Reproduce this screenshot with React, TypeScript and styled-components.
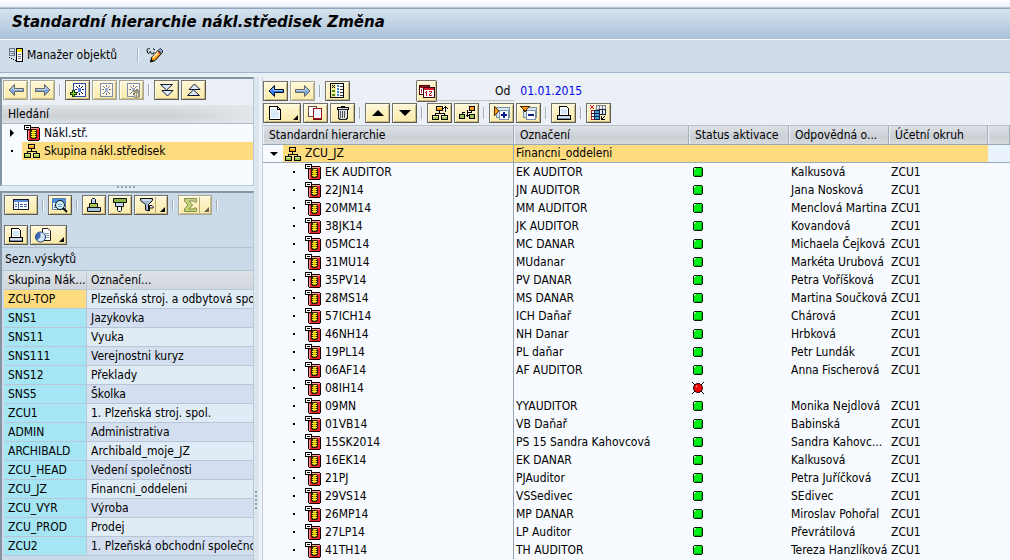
import React from "react";
import styled, { createGlobalStyle, css } from "styled-components";

const GlobalStyle = createGlobalStyle`
  * { box-sizing: border-box; }
  html, body { margin: 0; padding: 0; }
  body {
    font-family: "DejaVu Sans Condensed", Tahoma, "Noto Sans", sans-serif;
    font-size: 12px;
    color: #000;
    background: #eaf0f6;
    overflow: hidden;
  }
  button { font: inherit; color: inherit; }
`;

/* ---------- page frame ---------- */

const Page = styled.div`
  display: flex;
  flex-direction: column;
  height: 100vh;
  background: #e9f0f6;
`;

const MenuStrip = styled.div`
  height: 8px;
  flex: none;
  background: linear-gradient(#fdfeff, #ebf0f6);
  border-bottom: 1px solid #b4c3d3;
`;

const TitleBar = styled.header`
  flex: none;
  height: 32px;
  padding: 0 12px;
  border-top: 1px solid #8ea5bc;
  border-bottom: 1px solid #f4f8fb;
  background: linear-gradient(#d6e3ee, #c3d4e4 45%, #a9c1d9);
`;

const Title = styled.h1`
  margin: 0;
  font-family: "DejaVu Sans", Tahoma, sans-serif;
  font-size: 15px;
  line-height: 26px;
  font-weight: bold;
  font-style: italic;
  white-space: nowrap;
`;

const AppBar = styled.nav`
  flex: none;
  display: flex;
  align-items: center;
  height: 33px;
  padding: 0 8px 2px;
  border-bottom: 1px solid #9db4ca;
  background: #d0dde8;
`;

const FlatButton = styled.button`
  display: flex;
  align-items: center;
  gap: 3px;
  padding: 0;
  border: 0;
  background: none;
  white-space: nowrap;
`;

const BarDivider = styled.span`
  width: 2px;
  height: 14px;
  margin: 0 7px 0 20px;
  background: #f2f7fb;
  border-left: 1px solid #9db4ca;
`;

const Workspace = styled.main`
  flex: 1;
  display: flex;
  min-height: 0;
  padding-top: 4px;
`;

const Sidebar = styled.aside`
  flex: none;
  width: 254px;
  display: flex;
  flex-direction: column;
  min-height: 0;
`;

const frame = css`
  border-left: 2px solid #8494a3;
  border-top: 2px solid #8494a3;
  border-right: 1px solid #b9c8d5;
`;

const SearchPanel = styled.section`
  ${frame}
  flex: none;
  height: 109px;
  display: flex;
  flex-direction: column;
  background: #f7faff;
  border-bottom: 1px solid #b9c8d5;
`;

const HitPanel = styled.section`
  ${frame}
  flex: 1;
  min-height: 0;
  overflow: hidden;
  background: #cbdae9;
`;

const HorizontalGrip = styled.div`
  flex: none;
  height: 5px;
  display: flex;
  justify-content: center;
  align-items: flex-start;
  background: #e3ebf2;
`;

const VerticalGrip = styled.div`
  flex: none;
  width: 8px;
  display: flex;
  justify-content: flex-start;
  align-items: flex-end;
  padding: 0 0 49px 1px;
  border-right: 3px solid #edf3f8;
  background: #dce6ee;
`;

/* ---------- toolbars ---------- */

const Toolbar = styled.div`
  flex: none;
  display: flex;
  align-items: center;
  gap: 2px;
  height: 22px;
`;

const SearchToolbar = styled(Toolbar)`
  height: 26px;
  padding: 0 0 4px 1px;
  background: #eaf0f6;
`;

const HitTools = styled.div`
  display: flex;
  flex-direction: column;
  gap: 10px;
  padding: 2px 0 2px 2px;
`;

const HitToolbar = styled(Toolbar)`
  height: 20px;
`;

const ToolButton = styled.button<{ $w?: number }>`
  display: flex;
  flex: none;
  align-items: center;
  justify-content: center;
  width: ${(p) => p.$w || 25}px;
  height: 20px;
  padding: 0;
  border: 1px solid #777367;
  border-right-color: #5d594f;
  border-bottom-color: #5d594f;
  box-shadow: inset 1px 1px #fffbe6, inset -1px -1px #c9bb88;
  background: linear-gradient(#fff7d8, #faeaa8);
  &:disabled { border-color: #a9a793; }
  &:disabled svg { opacity: 0.6; }
`;

const CalendarButton = styled(ToolButton)`
  height: 22px;
  border-radius: 2px;
`;

const Gap = styled.span`
  flex: none;
  width: 2px;
  height: 12px;
  margin: 0 2px;
  border-left: 1px solid #a3adb5;
  border-right: 1px solid #f6fafd;
`;

/* ---------- search tree ---------- */

const PanelHeading = styled.h2`
  margin: 0;
  flex: none;
  height: 19px;
  padding-left: 6px;
  font-size: 12px;
  font-weight: normal;
  line-height: 19px;
  background: linear-gradient(90deg, transparent 70%, #e2e7eb), linear-gradient(#dfe3e7, #ccd1d6 60%, #dadfe3);
  border-bottom: 1px solid #b0bac4;
`;

const Tree = styled.ul`
  margin: 0;
  padding: 0;
  list-style: none;
`;

const TreeItem = styled.li`
  display: flex;
  height: 18px;
`;

const Twisty = styled.span<{ $w: number }>`
  flex: none;
  width: ${(p) => p.$w}px;
  display: flex;
  align-items: center;
  justify-content: center;
`;

const TreeLabel = styled.span<{ $selected?: boolean }>`
  flex: 1;
  display: flex;
  align-items: center;
  gap: 4px;
  padding-left: 2px;
  line-height: 18px;
  white-space: nowrap;
  background: ${(p) => (p.$selected ? "#fddc80" : "none")};
`;

/* ---------- hit list ---------- */

const HitTitle = styled.h2`
  margin: 0;
  height: 24px;
  padding-left: 3px;
  font-size: 12px;
  font-weight: normal;
  line-height: 23px;
  border-top: 1px solid #b3c2d1;
  border-bottom: 1px solid #b3c2d1;
`;

const HitTable = styled.table`
  width: 100%;
  table-layout: fixed;
  border-collapse: separate;
  border-spacing: 0;
  margin-left: 2px;
  th, td {
    height: 19px;
    padding: 0 0 0 4px;
    text-align: left;
    font-weight: normal;
    line-height: 18px;
    white-space: nowrap;
    overflow: hidden;
    border-right: 1px solid #b9c6d6;
    border-bottom: 1px solid #b9c6d6;
  }
  th {
    background: linear-gradient(#dde2e7, #d0d6dc);
  }
`;

const HitKey = styled.td<{ $selected?: boolean }>`
  background: ${(p) => (p.$selected ? "#fddc80" : "#a5e5f4")};
`;

const HitText = styled.td<{ $alt?: boolean }>`
  background: ${(p) => (p.$alt ? "#d3dff0" : "#dfebf5")};
`;

/* ---------- hierarchy ---------- */

const Content = styled.section`
  flex: 1;
  min-width: 0;
  display: flex;
  flex-direction: column;
  padding-top: 3px;
  border-left: 1px solid #c3ced8;
  background: #eaf0f6;
`;

const DateField = styled.label`
  display: flex;
  align-items: center;
  gap: 10px;
  padding-left: 56px;
  position: relative;
  &::before {
    content: "";
    position: absolute;
    left: -2px;
    bottom: -1px;
    width: 78px;
    height: 1px;
    background: #bdc2c4;
  }
`;

const DateInput = styled.input`
  width: 80px;
  height: 18px;
  padding: 0;
  border: 0;
  outline: 0;
  background: none;
  font: inherit;
  color: #0000f0;
`;

const Spacer = styled.span<{ $w: number }>`
  flex: none;
  width: ${(p) => p.$w}px;
`;

const HierarchyScroll = styled.div`
  flex: 1;
  min-height: 0;
  margin-top: 1px;
  overflow: hidden;
  background: #f7faff;
`;

const HierarchyTable = styled.table`
  width: 100%;
  table-layout: fixed;
  border-collapse: separate;
  border-spacing: 0;
  th, td {
    height: 18px;
    padding: 0 0 0 2px;
    text-align: left;
    font-weight: normal;
    line-height: 18px;
    white-space: nowrap;
    overflow: hidden;
  }
  td:first-child { border-right: 1px solid #96a4b3; padding: 0; }
  th {
    height: 20px;
    padding-left: 6px;
    border-top: 1px solid #b6c1cc;
    border-bottom: 1px solid #98a9ba;
    border-right: 1px solid #a3adb8;
    box-shadow: inset 1px 0 #eef1f4;
    background: linear-gradient(#dde1e5, #cbd0d6 60%, #d6dade);
  }
`;

const NameCell = styled.span`
  display: flex;
  align-items: center;
  height: 18px;
`;

const GroupRow = styled.tr`
  td {
    line-height: 17px;
    background: #fddc80;
    border-bottom: 1px solid #98a9ba;
  }
  ${NameCell} { height: 17px; }
  td:first-child { background: linear-gradient(90deg, #f7faff 20px, #fddc80 20px); }
  td:last-child { background: #eaf2fb; }
`;

const NameText = styled.span`
  padding-left: 4px;
`;

const StatusCell = styled.td`
  svg { display: block; margin-left: 1px; }
`;

/* ---------- icons ---------- */

type IconProps = { w?: number; h?: number; children: React.ReactNode };

const Icon = ({ w = 16, h = 16, children }: IconProps) => (
  <svg width={w} height={h} viewBox={`0 0 ${w} ${h}`} fill="none" shapeRendering="crispEdges" aria-hidden="true">
    {children}
  </svg>
);

const ArrowIcon = ({ right }: { right?: boolean }) => (
  <svg width="16" height="14" viewBox="0 0 16 14" aria-hidden="true">
    <g transform={right ? "matrix(-1 0 0 1 16 0)" : undefined}>
      <path d="M1 7 6.5 1.5V5.500H15.500V8.500H6.500V12.500Z" fill="#2f74f2" stroke="#050a24" />
      <path d="M2.500 7 5.500 4V6.500H14.500" fill="none" stroke="#8cc4ff" />
    </g>
  </svg>
);

const StarPage = ({ mark }: { mark?: "plus" | "trash" }) => (
  <Icon>
    <path d="M3.500 1.500H15.500V14.500H3.500Z" fill="#fff" stroke="#2c4aa6" />
    <path d="M9 3H10V5H9ZM9 11H10V13H9ZM5 7H7V8H5ZM12 7H14V8H12ZM6 4H7V5H6ZM7 5H8V6H7ZM12 4H13V5H12ZM11 5H12V6H11ZM6 11H7V12H6ZM7 10H8V11H7ZM12 11H13V12H12ZM11 10H12V11H11Z" fill="#101c5c" />
    <path d="M8 6H11V10H8Z" fill="#5c7fd8" />
    {mark === "plus" && (
      <>
        <path d="M2 8H5V10H7V13H5V15H2V13H0V10H2Z" fill="#143c08" />
        <path d="M3 9H4V11H6V12H4V14H3V12H1V11H3Z" fill="#86e01a" />
      </>
    )}
    {mark === "trash" && (
      <>
        <path d="M9 8H16V10H9ZM10 10H15V16H10Z" fill="#5b5b55" />
        <path d="M11 11H12V15H11ZM13 11H14V15H13Z" fill="#dedbd0" />
      </>
    )}
  </Icon>
);

const DoubleTriangle = ({ up }: { up?: boolean }) => (
  <svg width="16" height="14" viewBox="0 0 16 14" aria-hidden="true">
    <g transform={up ? "matrix(1 0 0 -1 0 14)" : undefined} fill="#dcecff" stroke="#101830">
      <path d="M3 7.500H14L8.500 13Z" />
      <path d="M1.500 1.500H13.500L7.500 7Z" />
    </g>
  </svg>
);

const ManagerIcon = () => (
  <Icon w={16} h={15}>
    <path d="M1.500.5H6.500V7.500H1.500ZM1 3.500H7M3 5.500H6" stroke="#6a7684" />
    <path d="M1 9.500H2M3 10.500H4M5 11.500H6M7 12.500H8" stroke="#000" />
    <path d="M8.500.5H14.500V13.500H8.500Z" fill="#fff" stroke="#000" />
    <path d="M9 1H14V4H9Z" fill="#ffe600" />
    <path d="M10 6.500H13M10 8.500H13M10 10.500H13" stroke="#6a7684" />
  </Icon>
);

const EditDisplayIcon = () => (
  <svg width="18" height="16" viewBox="0 0 18 16" aria-hidden="true">
    <path d="M1 4C1 1 3 1 4 2M1.500 4A1.500 1.500 0 1 0 4 4M5 5.500A1.500 1.500 0 1 0 8 5M7 1.500 9 3" fill="none" stroke="#000" />
    <path d="M4.500 15 5.500 10.500 12 3.500 15.500 6.500 9 13.500Z" fill="#ff9c12" stroke="#000" />
    <path d="M7 10.500 12.500 5" stroke="#ffe6a0" strokeWidth="2" />
    <path d="M12 3.500 14 1.500 16.500 3.500V5L15.500 6.500Z" fill="#8fa8e8" stroke="#223" />
    <path d="M12 5 14 7" stroke="#e0322c" />
    <path d="M4.500 15 5.200 12 7.500 14Z" fill="#000" />
  </svg>
);

const CostCenterIcon = () => (
  <Icon>
    <path d="M3 2H15V3H16V15H15V16H4V15H3Z" fill="#1c0000" />
    <path d="M4 3H15V15H4Z" fill="#ee2431" />
    <path d="M7 3H15V4H7ZM4 6H5V15H4Z" fill="#ff9a98" />
    <path d="M7 4H12V5H13V13H12V14H7V13H6V5H7Z" fill="#2a2100" />
    <path d="M8 5H12V6H8ZM7 7H12V8H7ZM7 9H12V10H7ZM7 11H12V12H7Z" fill="#fff02a" />
    <path d="M8 6H11V7H8ZM8 8H11V9H8ZM8 10H11V11H8ZM8 12H11V13H8Z" fill="#c9a800" />
    <path d="M.5.5H6.500V4.500H.5Z" fill="#fff" stroke="#000" />
    <path d="M2 2H5V3H2Z" fill="#000" />
  </Icon>
);

const GroupIcon = ({ mark }: { mark?: "up" }) => (
  <Icon>
    <path d="M7.500 6V8.500M3.500 10V8.500H12.500V10" stroke="#000" />
    <path d="M4.500 1.500H10.500V5.500H4.500Z" fill="#ff9f12" stroke="#000" />
    <path d="M5 2H10V3H5Z" fill="#ffdf70" />
    <path d="M.5 10.500H6.500V14.500H.5Z" fill="#9cc44c" stroke="#000" />
    <path d="M9.500 10.500H15.500V14.500H9.500Z" fill="#9cc44c" stroke="#000" />
    <path d="M1 11H6V12H1ZM10 11H15V12H10Z" fill="#d9efa0" />
    {mark && <path d="M13 1H14V7H13ZM12 2H15V3H12ZM11 3H12V4H11ZM15 3H16V4H15Z" fill="#000" />}
  </Icon>
);

const SubGroupIcon = () => (
  <Icon>
    <path d="M3.500 9V7.500H6M9 7.500H12.500V6M8.500 5V12M7 10.500H8M9 10.500H10" stroke="#000" />
    <path d="M10.500 1.500H15.500V5.500H10.500Z" fill="#ff9f12" stroke="#000" />
    <path d="M.5 9.500H5.500V13.500H.5ZM10.500 9.500H15.500V13.500H10.500Z" fill="#9cc44c" stroke="#000" />
  </Icon>
);

const LayoutIcon = () => (
  <Icon h={14}>
    <path d="M.5 1.500H15.500V11.500H.5Z" fill="#fff" stroke="#101830" />
    <path d="M1 2H15V4H1Z" fill="#5d8ad6" />
    <path d="M5.500 4V11M2 6.500H4M2 8.500H4M7 6.500H10M11 6.500H14M7 8.500H10M11 8.500H14" stroke="#3f65ad" />
  </Icon>
);

const DetailIcon = () => (
  <svg width="18" height="16" viewBox="0 0 18 16" aria-hidden="true">
    <path d="M1.500 1.500H14.500V12.500H1.500Z" fill="#fff" stroke="#5479b4" />
    <path d="M2 2H14V6H2Z" fill="#4793e0" />
    <path d="M3 8.500H6M3 10.500H6" stroke="#5479b4" />
    <circle cx="9" cy="8" r="4.500" fill="#c9e9f8" stroke="#111" />
    <path d="m12 11 4 4" stroke="#111" strokeWidth="2" />
    <path d="M7 7.500H11M7 9.500H11" stroke="#7dabc7" />
  </svg>
);

const SortIcon = ({ down }: { down?: boolean }) => (
  <svg width="16" height="14" viewBox="0 0 16 14" aria-hidden="true">
    <g transform={down ? "matrix(1 0 0 -1 0 14)" : undefined} stroke="#111">
      <path d="M5.500 5.500V1.500L6.500.5H8.500L9.500 1.500V5.500Z" fill={down ? "#f4f8fc" : "#b9d4f5"} />
      <path d="M3.500 5.500H11.500V9.500H3.500Z" fill={down ? "#c8dcf0" : "#a6c94c"} />
      <path d="M1.500 9.500H14.500V13.500H1.500Z" fill={down ? "#8cb83d" : "#a9c4de"} />
    </g>
  </svg>
);

const FilterIcon = () => (
  <svg width="16" height="14" viewBox="0 0 16 14" aria-hidden="true">
    <path d="M1.500.5H13.500V2.500L9.500 6.500V13L6.500 12V6.500L1.500 2.500Z" fill="#9fb9d2" stroke="#111" />
    <path d="M3 2H12" stroke="#fff" />
    <path d="M10.500 13V7.500H13L14 8.500V10H11" fill="#fff" stroke="#111" />
  </svg>
);

const SumIcon = () => (
  <svg width="15" height="14" viewBox="0 0 15 14" aria-hidden="true">
    <path d="M1.500.5H13.500V4H11V3H6L9.500 7 6 11H11V10H13.500V13.500H1.500V11L5 7 1.500 3Z" fill="#9cc13b" stroke="#3e4a20" />
  </svg>
);

const DropMark = () => (
  <svg width="5" height="5" viewBox="0 0 5 5" aria-hidden="true">
    <path d="M5 0V5H0Z" fill="#000" />
  </svg>
);

const PrintIcon = () => (
  <Icon h={15}>
    <path d="M3.500 9V.5H10.500L12.500 2.500V9" fill="#fff" stroke="#000" />
    <path d="M5 3H11V8H5Z" fill="#d3e6f8" />
    <path d="M1.500 9.500H14.500V13.500H1.500Z" fill="#cfdce9" stroke="#000" />
    <path d="M2 12.500H14" stroke="#7f92a6" />
  </Icon>
);

const PreviewIcon = () => (
  <svg width="17" height="15" viewBox="0 0 17 15" aria-hidden="true">
    <path d="M7.500.5H13L15.500 3V12.500H7.500Z" fill="#fff" stroke="#222" />
    <path d="M10 5.500H14M10 7.500H14M11 9.500H14" stroke="#8395a7" />
    <circle cx="5.500" cy="9" r="5" fill="#d5e7fb" stroke="#1e3d7a" />
    <path d="M5.500 9V4A5 5 0 0 0 2 12.500Z" fill="#3d67b0" />
  </svg>
);

const ChecklistIcon = () => (
  <Icon w={15} h={16}>
    <path d="M.5.5H13.500V14.500H.5Z" fill="#fff" stroke="#000" />
    <path d="M1 1H6V14H1Z" fill="#f2ef9c" />
    <path d="M2 2H3V3H2ZM4 2H5V3H4ZM3 3H4V4H3ZM2 4H3V5H2ZM4 4H5V5H4Z" fill="#000" />
    <path d="M2 7H5V9H2ZM2 11H5V13H2Z" fill="#4c8b27" />
    <path d="M7 2H9V4H7ZM7 5H9V7H7ZM7 8H9V10H7ZM7 11H9V13H7Z" fill="#3f7fc4" />
    <path d="M10 3.500H13M10 6.500H13M10 9.500H13M10 12.500H13" stroke="#333" />
  </Icon>
);

const CalendarIcon = () => (
  <Icon w={16} h={15}>
    <path d="M.5 1.500H10.500V10.500H.5Z" fill="#fff" stroke="#3a0606" />
    <path d="M1 2H10V4H1Z" fill="#a80f1c" />
    <path d="M2 5H3V9H2Z" fill="#c21725" />
    <path d="M4.500 3.500H15.500V13.500H4.500Z" fill="#fff" stroke="#3a0606" />
    <path d="M5 4H15V6H5Z" fill="#d11f2b" />
    <path d="M7 7H8V12H7ZM6 8H7V9H6ZM10 7H13V8H10ZM12 8H13V9H12ZM11 9H12V10H11ZM10 10H11V11H10ZM10 11H13V12H10Z" fill="#c21725" />
  </Icon>
);

const PageIcon = () => (
  <Icon w={14} h={14}>
    <path d="M1.500.5H9.500L12.500 3.500V13.500H1.500Z" fill="#fff" stroke="#000" />
    <path d="M3 3H9V6H11V12H3Z" fill="#d8ebfa" />
    <path d="M9.500.5V3.500H12.500" stroke="#000" />
  </Icon>
);

const CopyIcon = () => (
  <Icon w={15} h={14}>
    <path d="M.5.5H8.500V10.500H.5Z" fill="#fff" stroke="#6b4a4a" />
    <path d="M5.500 2.500H13.500V12.500H5.500Z" fill="#eef6fd" stroke="#a5101c" />
    <path d="M5 13H14V14H5Z" fill="#6b0a12" />
  </Icon>
);

const TrashIcon = () => (
  <Icon w={14} h={15}>
    <path d="M5 0H9V1H5Z" fill="#000" />
    <path d="M1.500 1.500H12.500V3.500H1.500Z" fill="#d8dde2" stroke="#000" />
    <path d="M2.500 3.500H11.500V11.500L10.500 13.500H3.500L2.500 11.500Z" fill="#d8dde2" stroke="#222" />
    <path d="M4.500 5V12M6.500 5V12M8.500 5V12" stroke="#555" />
  </Icon>
);

const MoveIcon = ({ down }: { down?: boolean }) => (
  <svg width="12" height="6" viewBox="0 0 12 6" aria-hidden="true">
    <path d={down ? "M0 0H12L6 6Z" : "M0 6 6 0 12 6Z"} fill="#000" />
  </svg>
);

const ExpandIcon = ({ collapse }: { collapse?: boolean }) => (
  <Icon w={17} h={15}>
    <path d="M3.500 1.500H16.500V11.500H3.500Z" fill="#d7e4f2" stroke="#7892ae" />
    <path d="M6.500 4.500H15.500V13.500H6.500Z" fill="#fff" stroke="#7892ae" />
    <path d="M8 8H14V10H8Z" fill="#0a1e8c" />
    {!collapse && <path d="M10 6H12V12H10Z" fill="#0a1e8c" />}
    {collapse ? (
      <path d="M.5.5H9.500L5 5.500Z" fill="#ff9d12" stroke="#4d2a00" />
    ) : (
      <path d="M1.500.5 6 5 1.500 9.500Z" fill="#ff9d12" stroke="#4d2a00" />
    )}
  </Icon>
);

const ColumnsIcon = () => (
  <Icon w={17} h={16}>
    <path d="M0 0H1V1H0ZM3 0H4V1H3ZM1 1H3V3H1ZM0 3H1V4H0ZM3 3H4V4H3Z" fill="#d4101c" />
    <path d="M6.500.5H15.500V4.500H6.500ZM9.500 1V5M12.500 1V5" fill="#e8edf3" stroke="#7a7f8a" />
    <path d="M1.500 5.500H4.500V14.500H1.500Z" fill="#fff" stroke="#c41a26" />
    <path d="M4.500 5.500H9.500V14.500H4.500Z" fill="#3d9fe0" stroke="#17233e" />
    <path d="M9.500 4.500H15.500V9.500H9.500ZM12.500 4V9" fill="#e8edf3" stroke="#17233e" />
    <path d="M1 8.500H10M1 11.500H10" stroke="#17233e" />
    <path d="M11 11H12V15H11ZM11 14H15V15H11ZM13 12H14V13H13ZM14 11H15V12H14ZM12 13H13V14H12Z" fill="#000" />
  </Icon>
);

const OkIcon = () => (
  <Icon w={12} h={12}>
    <path d="M2 1H10V2H11V10H10V11H2V10H1V2H2Z" fill="#042204" />
    <path d="M2 2H10V10H2Z" fill="#00f218" />
    <path d="M2 2H4V3H3V4H2Z" fill="#b4ffb4" />
    <path d="M3 9H9V3H10V10H3Z" fill="#00b010" />
  </Icon>
);

const ErrorIcon = () => (
  <svg width="12" height="12" viewBox="0 0 12 12" aria-hidden="true">
    <path d="M0 0 12 12M12 0 0 12" stroke="#000" />
    <circle cx="6" cy="6" r="4.500" fill="#f00606" stroke="#200" />
    <path d="M4 5 5 4" stroke="#ffb0b0" strokeWidth="1.500" />
  </svg>
);

const Dot = () => (
  <Icon w={3} h={3}>
    <path d="M0 0H2V2H0Z" fill="#000" />
  </Icon>
);

const ClosedArrow = () => (
  <svg width="4" height="8" viewBox="0 0 4 8" aria-hidden="true">
    <path d="M0 0 4 4 0 8Z" fill="#000" />
  </svg>
);

const OpenArrow = () => (
  <svg width="8" height="4" viewBox="0 0 8 4" aria-hidden="true">
    <path d="M0 0H8L4 4Z" fill="#000" />
  </svg>
);

const GripDots = ({ vertical }: { vertical?: boolean }) => (
  <Icon w={vertical ? 3 : 20} h={vertical ? 20 : 3}>
    {[0, 4, 8, 12, 16].map((n) => (
      <rect key={n} x={vertical ? 0 : n} y={vertical ? n : 0} width="2" height="2" fill="#94a3b1" />
    ))}
  </Icon>
);

const MenuButtonFace = styled(ToolButton)<{ $split?: boolean }>`
  justify-content: flex-start;
  padding-left: 4px;
  svg:last-child { margin: 8px 2px 0 auto; }
  background: ${(p) =>
    p.$split
      ? "linear-gradient(90deg, transparent 20px, #b6a878 20px, #b6a878 21px, transparent 21px), linear-gradient(#fff7d8, #faeaa8)"
      : "linear-gradient(#fff7d8, #faeaa8)"};
`;

/* ---------- data ---------- */

const hits = [
  ["ZCU-TOP", "Plzeňská stroj. a odbytová společnost"],
  ["SNS1", "Jazykovka"],
  ["SNS11", "Vyuka"],
  ["SNS111", "Verejnostni kuryz"],
  ["SNS12", "Překlady"],
  ["SNS5", "Školka"],
  ["ZCU1", "1. Plzeňská stroj. spol."],
  ["ADMIN", "Administrativa"],
  ["ARCHIBALD", "Archibald_moje_JZ"],
  ["ZCU_HEAD", "Vedení společnosti"],
  ["ZCU_JZ", "Financni_oddeleni"],
  ["ZCU_VYR", "Výroba"],
  ["ZCU_PROD", "Prodej"],
  ["ZCU2", "1. Plzeňská obchodní společnost"],
];

const centers = [
  ["EK AUDITOR", "EK AUDITOR", "Kalkusová"],
  ["22JN14", "JN AUDITOR", "Jana Nosková"],
  ["20MM14", "MM AUDITOR", "Menclová Martina"],
  ["38JK14", "JK AUDITOR", "Kovandová"],
  ["05MC14", "MC DANAR", "Michaela Čejková"],
  ["31MU14", "MUdanar", "Markéta Urubová"],
  ["35PV14", "PV DANAR", "Petra Voříšková"],
  ["28MS14", "MS DANAR", "Martina Součková"],
  ["57ICH14", "ICH Daňař", "Chárová"],
  ["46NH14", "NH Danar", "Hrbková"],
  ["19PL14", "PL daňar", "Petr Lundák"],
  ["06AF14", "AF AUDITOR", "Anna Fischerová"],
  ["08IH14", "", ""],
  ["09MN", "YYAUDITOR", "Monika Nejdlová"],
  ["01VB14", "VB Daňař", "Babinská"],
  ["15SK2014", "PS 15 Sandra Kahovcová", "Sandra Kahovc..."],
  ["16EK14", "EK DANAR", "Kalkusová"],
  ["21PJ", "PJAuditor", "Petra Juříčková"],
  ["29VS14", "VSSedivec", "SEdivec"],
  ["26MP14", "MP DANAR", "Miroslav Pohořal"],
  ["27LP14", "LP Auditor", "Převrátilová"],
  ["41TH14", "TH AUDITOR", "Tereza Hanzlíková"],
];

export default function App() {
  return (
    <Page>
      <GlobalStyle />
      <MenuStrip />
      <TitleBar>
        <Title>Standardní hierarchie nákl.středisek Změna</Title>
      </TitleBar>
      <AppBar>
        <FlatButton><ManagerIcon />Manažer objektů</FlatButton>
        <BarDivider />
        <FlatButton aria-label="Zobrazit / změnit"><EditDisplayIcon /></FlatButton>
      </AppBar>
      <Workspace>
        <Sidebar>
          <SearchPanel>
            <SearchToolbar>
              <ToolButton disabled aria-label="Zpět"><ArrowIcon /></ToolButton>
              <ToolButton disabled aria-label="Vpřed"><ArrowIcon right /></ToolButton>
              <Gap />
              <ToolButton aria-label="Přidat"><StarPage mark="plus" /></ToolButton>
              <ToolButton disabled aria-label="Oblíbené"><StarPage /></ToolButton>
              <ToolButton disabled aria-label="Odebrat"><StarPage mark="trash" /></ToolButton>
              <Gap />
              <ToolButton aria-label="Rozbalit vše"><DoubleTriangle /></ToolButton>
              <ToolButton aria-label="Sbalit vše"><DoubleTriangle up /></ToolButton>
            </SearchToolbar>
            <PanelHeading>Hledání</PanelHeading>
            <Tree>
              <TreeItem>
                <Twisty $w={20}><ClosedArrow /></Twisty>
                <TreeLabel><CostCenterIcon />Nákl.stř.</TreeLabel>
              </TreeItem>
              <TreeItem>
                <Twisty $w={20}><Dot /></Twisty>
                <TreeLabel $selected><GroupIcon />Skupina nákl.středisek</TreeLabel>
              </TreeItem>
            </Tree>
          </SearchPanel>
          <HorizontalGrip><GripDots /></HorizontalGrip>
          <HitPanel>
            <HitTools>
              <HitToolbar>
                <ToolButton $w={34} aria-label="Rozvržení"><LayoutIcon /></ToolButton>
                <Gap />
                <ToolButton $w={24} aria-label="Detail"><DetailIcon /></ToolButton>
                <Gap />
                <ToolButton $w={24} aria-label="Třídit vzestupně"><SortIcon /></ToolButton>
                <ToolButton $w={24} aria-label="Třídit sestupně"><SortIcon down /></ToolButton>
                <MenuButtonFace $w={34} $split aria-label="Filtr"><FilterIcon /><DropMark /></MenuButtonFace>
                <Gap />
                <MenuButtonFace $w={34} $split disabled aria-label="Součet"><SumIcon /><DropMark /></MenuButtonFace>
                <Gap />
              </HitToolbar>
              <HitToolbar>
                <ToolButton $w={24} aria-label="Tisk"><PrintIcon /></ToolButton>
                <MenuButtonFace $w={37} aria-label="Náhled"><PreviewIcon /><DropMark /></MenuButtonFace>
              </HitToolbar>
            </HitTools>
            <HitTitle>Sezn.výskytů</HitTitle>
            <HitTable>
              <colgroup><col style={{ width: 83 }} /><col /></colgroup>
              <thead>
                <tr><th>Skupina Nák...</th><th>Označení...</th></tr>
              </thead>
              <tbody>
                {hits.map(([key, text], i) => (
                  <tr key={key}>
                    <HitKey $selected={i === 0}>{key}</HitKey>
                    <HitText $alt={i % 2 === 1}>{text}</HitText>
                  </tr>
                ))}
              </tbody>
            </HitTable>
          </HitPanel>
        </Sidebar>
        <VerticalGrip><GripDots vertical /></VerticalGrip>
        <Content>
          <Toolbar>
            <ToolButton aria-label="Zpět"><ArrowIcon /></ToolButton>
            <ToolButton disabled aria-label="Vpřed"><ArrowIcon right /></ToolButton>
            <Gap />
            <ToolButton aria-label="Legenda"><ChecklistIcon /></ToolButton>
            <Spacer $w={62} />
            <CalendarButton $w={21} aria-label="Kalendář"><CalendarIcon /></CalendarButton>
            <DateField>
              <span>Od</span>
              <DateInput defaultValue="01.01.2015" />
            </DateField>
          </Toolbar>
          <Toolbar>
            <MenuButtonFace $w={38} aria-label="Založit"><PageIcon /><DropMark /></MenuButtonFace>
            <ToolButton aria-label="Kopírovat"><CopyIcon /></ToolButton>
            <ToolButton aria-label="Smazat"><TrashIcon /></ToolButton>
            <Gap />
            <ToolButton aria-label="Nahoru"><MoveIcon /></ToolButton>
            <ToolButton aria-label="Dolů"><MoveIcon down /></ToolButton>
            <Gap />
            <ToolButton aria-label="Nadřazená skupina"><GroupIcon mark="up" /></ToolButton>
            <ToolButton aria-label="Zařadit"><SubGroupIcon /></ToolButton>
            <Gap />
            <ToolButton aria-label="Rozbalit"><ExpandIcon /></ToolButton>
            <ToolButton aria-label="Sbalit"><ExpandIcon collapse /></ToolButton>
            <Gap />
            <ToolButton aria-label="Tisk"><PrintIcon /></ToolButton>
            <Gap />
            <ToolButton aria-label="Sloupce"><ColumnsIcon /></ToolButton>
          </Toolbar>
          <HierarchyScroll>
            <HierarchyTable>
              <colgroup>
                <col style={{ width: 251 }} />
                <col style={{ width: 175 }} />
                <col style={{ width: 100 }} />
                <col style={{ width: 100 }} />
                <col style={{ width: 99 }} />
                <col />
              </colgroup>
              <thead>
                <tr>
                  <th>Standardní hierarchie</th>
                  <th>Označení</th>
                  <th>Status aktivace</th>
                  <th>Odpovědná o...</th>
                  <th>Účetní okruh</th>
                  <th />
                </tr>
              </thead>
              <tbody>
                <GroupRow>
                  <td>
                    <NameCell>
                      <Twisty $w={22}><OpenArrow /></Twisty>
                      <GroupIcon />
                      <NameText>ZCU_JZ</NameText>
                    </NameCell>
                  </td>
                  <td>Financni_oddeleni</td>
                  <td /><td /><td /><td />
                </GroupRow>
                {centers.map(([id, label, person]) => (
                  <tr key={id}>
                    <td>
                      <NameCell>
                        <Spacer $w={20} />
                        <Twisty $w={22}><Dot /></Twisty>
                        <CostCenterIcon />
                        <NameText>{id}</NameText>
                      </NameCell>
                    </td>
                    <td>{label}</td>
                    <StatusCell>{person ? <OkIcon /> : <ErrorIcon />}</StatusCell>
                    <td>{person}</td>
                    <td>{person && "ZCU1"}</td>
                    <td />
                  </tr>
                ))}
              </tbody>
            </HierarchyTable>
          </HierarchyScroll>
        </Content>
      </Workspace>
    </Page>
  );
}
